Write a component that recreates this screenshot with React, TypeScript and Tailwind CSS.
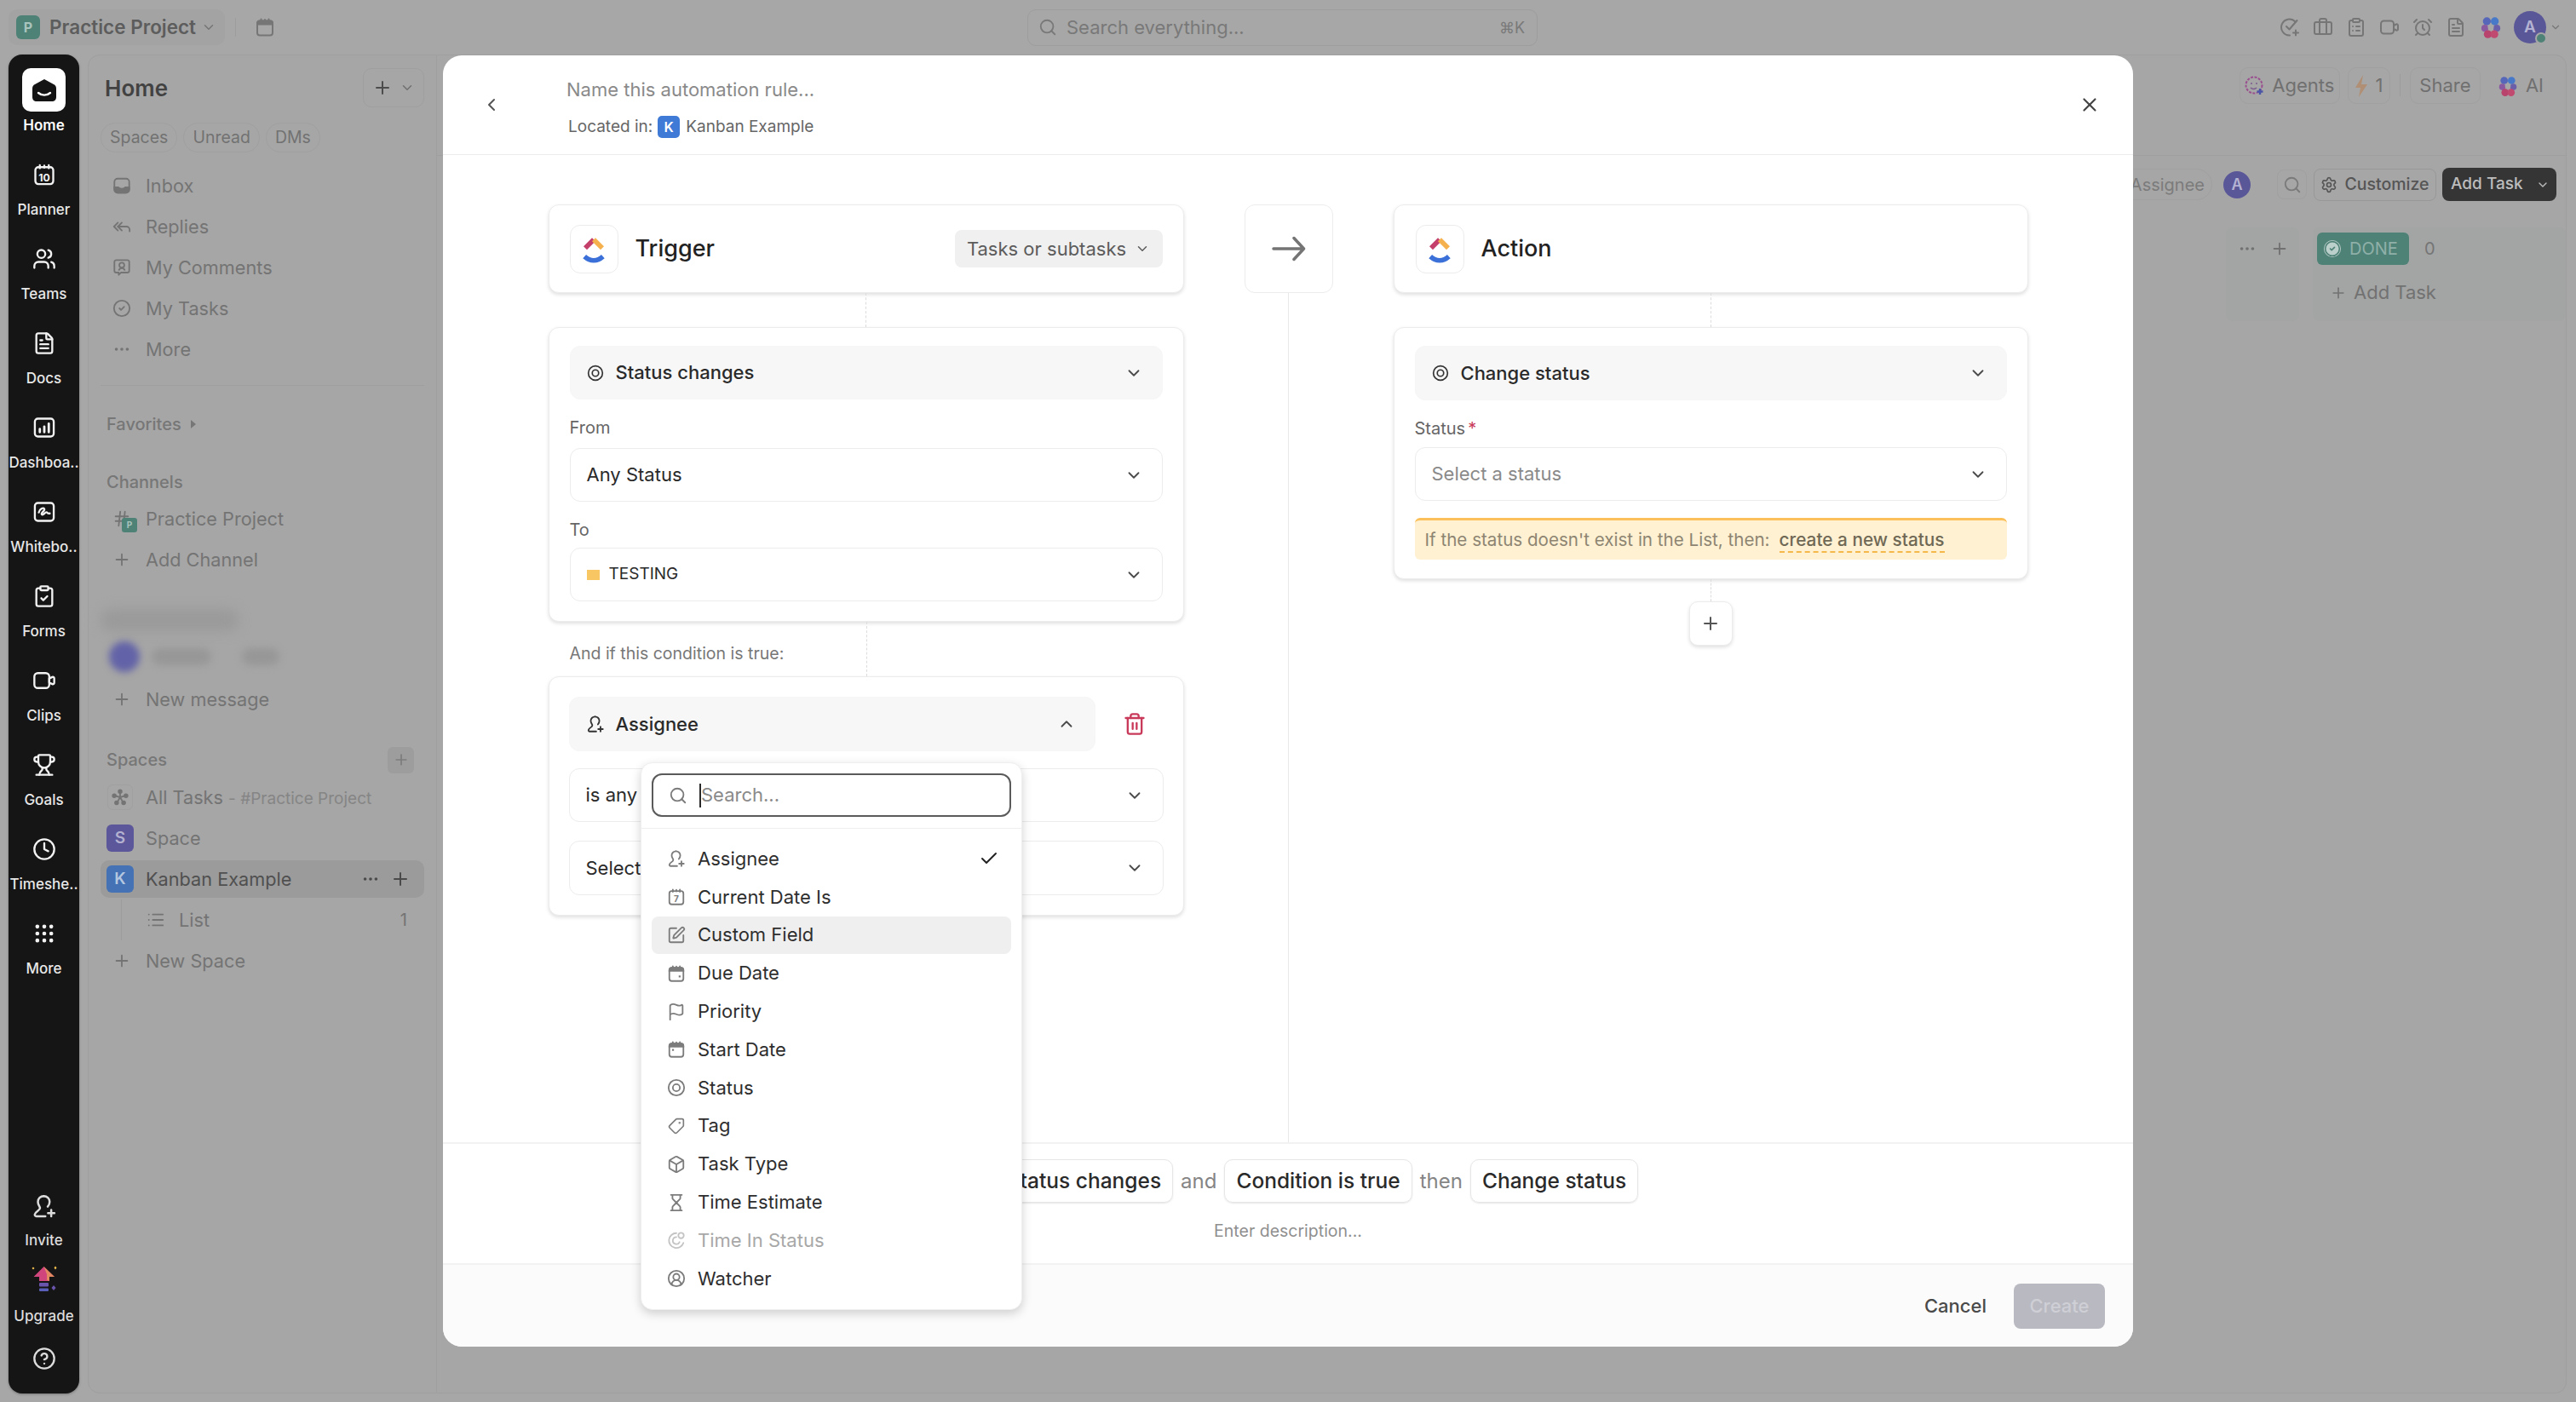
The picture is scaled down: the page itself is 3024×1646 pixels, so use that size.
import React from "react";
import {
  ChevronDown, ChevronUp, ChevronLeft, ReplyAll, CircleCheck, Ellipsis, Plus, Users, FileText, ClipboardCheck, Trophy, Clock, Grip, CircleHelp, Search, X, Trash2, Check, SquarePen, Flag, Tag, Box, Hourglass, CircleUserRound, List, Settings, AlarmClock, Briefcase, ClipboardList, Hash,
} from "lucide-react";

type P = { size?: number; className?: string };

function PersonPlus({ size = 24, className = "" }: P) {
  return (
    <svg width={size} height={size} viewBox="0 0 24 24" fill="none" stroke="currentColor" strokeWidth="2" strokeLinecap="round" strokeLinejoin="round" className={className}>
      <path d="M11.5 2.5a5.5 5.5 0 0 0-5.5 5.5c0 3 2 4.2 2 5.800 0 2-4.400 3.400-4.900 5.900-.2 1 .4 1.800 1.400 1.800H13" />
      <path d="M11.5 2.5A5.5 5.5 0 0 1 17 8c0 2-.8 3.400-1.800 4.500" />
      <path d="M18.5 15.500v6M15.500 18.500h6" />
    </svg>
  );
}

function Target({ size = 24, className = "" }: P) {
  return (
    <svg width={size} height={size} viewBox="0 0 24 24" fill="none" stroke="currentColor" strokeWidth="2" className={className}>
      <circle cx="12" cy="12" r="10" />
      <circle cx="12" cy="12" r="4.500" />
    </svg>
  );
}

function Cal({ size = 24, className = "", dot, label }: P & { dot?: "r" | "l"; label?: string }) {
  return (
    <svg width={size} height={size} viewBox="0 0 24 24" fill="none" stroke="currentColor" strokeWidth="2" strokeLinecap="round" className={className}>
      <rect x="3" y="4.500" width="18" height="17" rx="3" />
      {!label && <path d="M3 8.500V7.500a3 3 0 0 1 3-3h12a3 3 0 0 1 3 3v1z" fill="currentColor" />}
      <path d="M7.500 2.500v3M16.500 2.500v3M12 3v2" />
      {dot === "r" && <rect x="15" y="14.500" width="2.400" height="2.400" fill="currentColor" stroke="none" />}
      {dot === "l" && <rect x="6.500" y="11.500" width="2.400" height="2.400" fill="currentColor" stroke="none" />}
      {label && (
        <text x="12" y="18.500" textAnchor="middle" fontSize={label.length > 1 ? 10.500 : 11} fontWeight="700" fill="currentColor" stroke="none" fontFamily="Inter, sans-serif">
          {label}
        </text>
      )}
    </svg>
  );
}

function Logo({ size = 40 }: { size?: number }) {
  return (
    <svg width={size} height={size} viewBox="0 0 24 24" fill="none" strokeWidth="3.400">
      <path d="M6 11.500 12 5.500" stroke="#c4406b" />
      <path d="M12 5.500 18 11.500" stroke="#f6b14f" />
      <path d="M5.500 17.500c4 3.600 9 3.600 13 0" stroke="#3a70d8" />
    </svg>
  );
}

function Flower({ size = 26 }: { size?: number }) {
  return (
    <svg width={size} height={size} viewBox="0 0 24 24">
      <circle cx="8" cy="6" r="4" fill="#5666b8" />
      <circle cx="16" cy="6" r="4" fill="#4878c8" />
      <circle cx="6" cy="13" r="3.500" fill="#8a5aa0" />
      <circle cx="18" cy="13" r="3.500" fill="#6a5fa8" />
      <circle cx="9" cy="19" r="4" fill="#b8436c" />
      <circle cx="15.500" cy="19" r="4" fill="#c04a70" />
      <circle cx="12" cy="12" r="3" fill="#a7a7a7" />
    </svg>
  );
}

function InboxIcon() {
  return (
    <svg width="22" height="22" viewBox="0 0 24 24" fill="none" stroke="currentColor" strokeWidth="2">
      <rect x="2.500" y="3" width="19" height="18" rx="4" />
      <path d="M2.500 14h5c1 2.500 8 2.500 9 0h5v3a4 4 0 0 1-4 4h-11a4 4 0 0 1-4-4z" fill="currentColor" />
    </svg>
  );
}

function CommentIcon() {
  return (
    <svg width="22" height="22" viewBox="0 0 24 24" fill="none" stroke="currentColor" strokeWidth="2" strokeLinejoin="round">
      <path d="M5 2.500h14a2.500 2.500 0 0 1 2.500 2.500v11a2.500 2.500 0 0 1-2.500 2.500h-8l-3 3v-3H5A2.500 2.500 0 0 1 2.500 16V5A2.500 2.500 0 0 1 5 2.500z" />
      <circle cx="12" cy="9" r="3.200" />
      <path d="M8 16c.8-2 2-3 4-3s3.200 1 4 3" />
    </svg>
  );
}

function Wave({ size = 28 }: { size?: number }) {
  return (
    <svg width={size} height={size} viewBox="0 0 24 24" fill="none" stroke="currentColor" strokeWidth="2" strokeLinecap="round" strokeLinejoin="round">
      <rect x="2.500" y="3" width="19" height="18" rx="3" />
      <path d="M6.500 12.500c.5-3 4.500-5.500 5.500-3.500s-4 4-2.500 5.500 3.500-3 5-2 1 1.500 3 1" />
    </svg>
  );
}

function DashIcon({ size = 28 }: { size?: number }) {
  return (
    <svg width={size} height={size} viewBox="0 0 24 24" fill="none" stroke="currentColor" strokeWidth="2" strokeLinecap="round">
      <rect x="2.500" y="3" width="19" height="18" rx="3" />
      <path d="M7.500 16.500v-3M12 16.500v-5.500M16.500 16.500V8" strokeWidth="2.400" />
    </svg>
  );
}

function ClipIcon({ size = 28 }: P) {
  return (
    <svg width={size} height={size} viewBox="0 0 24 24" fill="none" stroke="currentColor" strokeWidth="2" strokeLinejoin="round">
      <rect x="2" y="4.500" width="15" height="15" rx="3.500" />
      <path d="M17 10l3-1.500c1-.5 2 .2 2 1.300v4.400c0 1.100-1 1.800-2 1.300L17 14z" />
    </svg>
  );
}

function CheckPlus({ size = 24 }: P) {
  return (
    <svg width={size} height={size} viewBox="0 0 24 24" fill="none" stroke="currentColor" strokeWidth="2" strokeLinecap="round" strokeLinejoin="round">
      <path d="M18.500 5.500A9.500 9.500 0 1 0 12 21.500" />
      <path d="M8 11l3.500 3.500L20.500 4" />
      <path d="M19 15.500v6M16 18.500h6" />
    </svg>
  );
}

function Star3({ size = 24 }: P) {
  return (
    <svg width={size} height={size} viewBox="0 0 24 24" fill="none" stroke="currentColor" strokeWidth="2" strokeLinecap="round">
      <path d="M12 12V5M12 12l-7-2M12 12l7-2M12 12l-4 7M12 12l4 7" />
      <circle cx="12" cy="4.500" r="2" fill="currentColor" />
      <circle cx="4.500" cy="10" r="2" fill="currentColor" />
      <circle cx="19.500" cy="10" r="2" fill="currentColor" />
      <circle cx="7.500" cy="19" r="2" fill="currentColor" />
      <circle cx="16.500" cy="19" r="2" fill="currentColor" />
    </svg>
  );
}

function HomeLogo() {
  return (
    <svg width="30" height="26" viewBox="0 0 30 26">
      <path d="M15 0 26 6c2 1 3 2.500 3 5v10c0 3-2 5-5 5H6c-3 0-5-2-5-5V11c0-2.500 1-4 3-5z" fill="#141414" />
      <path d="M8 16c4 3.500 10 3.500 14 0" stroke="#fff" strokeWidth="2.400" fill="none" strokeLinecap="round" />
    </svg>
  );
}

function UpgradeIcon() {
  return (
    <svg width="30" height="32" viewBox="0 0 30 32">
      <path d="M14.500 1 27 13h-6v5H9v-5H2.500z" fill="#d0467c" />
      <path d="M14.500 1 27 13h-6v5l-3-1v-7z" fill="#e8a05a" opacity=".75" />
      <rect x="9" y="20" width="11" height="4.500" rx="1" fill="#6a55ac" />
      <rect x="9" y="26.500" width="11" height="3.500" rx="1" fill="#5a5fb8" />
      <path d="M2 1.500 3.500 3 2 4.500.5 3zM28 .500l1.500 2-1.500 2-1.500-2z" fill="#f5c04f" />
      <path d="M26 23l2.500 3-2.500 3-2.500-3z" fill="#6a55ac" />
    </svg>
  );
}

function RailItem({ icon, label }: { icon: React.ReactNode; label: string }) {
  return (
    <div className="flex h-[99px] w-full flex-col items-center">
      <div className="flex h-[32px] items-center justify-center text-[#f2f2f2]">{icon}</div>
      <div className="mt-[13px] whitespace-nowrap text-[17px] font-medium leading-[24px] text-[#e8e8e8]">{label}</div>
    </div>
  );
}

function Rail() {
  const s = 28;
  return (
    <aside className="flex h-[1572px] w-[83px] flex-col items-center rounded-[16px] bg-[#151515] pt-[16px] shadow-[0_1px_3px_rgba(0,0,0,0.3)]">
      <div className="flex h-[51px] w-[51px] items-center justify-center rounded-[10px] bg-white">
        <HomeLogo />
      </div>
      <div className="mt-[4px] text-[17px] font-semibold leading-[24px] text-white">Home</div>
      <div className="mt-[30px] flex w-full flex-col">
        <RailItem icon={<Cal size={s} label="10" />} label="Planner" />
        <RailItem icon={<Users size={s} />} label="Teams" />
        <RailItem icon={<FileText size={s} />} label="Docs" />
        <RailItem icon={<DashIcon />} label="Dashboa.." />
        <RailItem icon={<Wave />} label="Whitebo.." />
        <RailItem icon={<ClipboardCheck size={s} />} label="Forms" />
        <RailItem icon={<ClipIcon />} label="Clips" />
        <RailItem icon={<Trophy size={s} />} label="Goals" />
        <RailItem icon={<Clock size={s} />} label="Timeshe.." />
        <RailItem icon={<Grip size={s} />} label="More" />
      </div>
      <div className="mt-auto flex w-full flex-col items-center pb-[27px] text-[#dcdcdc]">
        <PersonPlus size={30} />
        <div className="mt-[13px] text-[17px] font-medium leading-[24px]">Invite</div>
        <div className="mt-[18px]"><UpgradeIcon /></div>
        <div className="mt-[15px] text-[17px] font-medium leading-[24px]">Upgrade</div>
        <CircleHelp size={28} className="mt-[24px]" />
      </div>
    </aside>
  );
}

function SideRow({ icon, children, cls = "" }: { icon: React.ReactNode; children: React.ReactNode; cls?: string }) {
  return (
    <div className={`flex h-[48px] items-center text-[21.700px] text-[#747474] ${cls}`}>
      <div className="flex w-[53px] shrink-0 items-center pl-[14px]">{icon}</div>
      <div className="whitespace-nowrap">{children}</div>
    </div>
  );
}

function Tab({ children }: { children: React.ReactNode }) {
  return <div className="flex h-[35px] items-center rounded-full border border-[#a0a0a0] px-[10px] text-[19.500px] text-[#727272]">{children}</div>;
}

function SideBar() {
  return (
    <aside className="flex h-[1572px] w-[410px] flex-col rounded-tl-[14px] rounded-bl-[14px] border border-[#9f9f9f] bg-[#a6a6a6] px-[14px]">
      <div className="mt-[15px] flex h-[46px] items-center justify-between">
        <div className="pl-[5px] text-[26px] font-semibold text-[#424242]">Home</div>
        <div className="flex h-[46px] w-[72px] items-center justify-center gap-[8px] rounded-[10px] border border-[#9f9f9f] text-[#4c4c4c]">
          <Plus size={24} />
          <ChevronDown size={18} className="text-[#707070]" />
        </div>
      </div>
      <div className="mt-[18px] flex gap-[7px]">
        <Tab>Spaces</Tab>
        <Tab>Unread</Tab>
        <Tab>DMs</Tab>
      </div>
      <div className="mt-[15px]">
        <SideRow icon={<InboxIcon />}>Inbox</SideRow>
        <SideRow icon={<ReplyAll size={22} />}>Replies</SideRow>
        <SideRow icon={<CommentIcon />}>My Comments</SideRow>
        <SideRow icon={<CircleCheck size={22} />}>My Tasks</SideRow>
        <SideRow icon={<Ellipsis size={22} />}>More</SideRow>
      </div>
      <div className="mt-[18px] h-px bg-[#9f9f9f]" />
      <div className="mt-[30px] flex h-[30px] items-center pl-[7px] text-[20px] font-medium text-[#777777]">
        Favorites
        <svg width="8" height="10" viewBox="0 0 8 10" className="ml-[10px]"><path d="M1 0l6 5-6 5z" fill="#777777" /></svg>
      </div>
      <div className="mt-[38px] flex h-[30px] items-center pl-[7px] text-[20px] font-medium text-[#777777]">Channels</div>
      <div className="mt-[4px]">
        <SideRow
          icon={
            <div className="relative">
              <Hash size={22} />
              <div className="absolute left-[11px] top-[10px] flex h-[17px] w-[18px] items-center justify-center rounded-[3px] bg-[#4f8277] text-[10px] font-bold text-[#a9c3bd]">P</div>
            </div>
          }
        >
          Practice Project
        </SideRow>
        <SideRow icon={<Plus size={22} />}>Add Channel</SideRow>
      </div>
      <div className="mt-[34px] h-[26px] w-[162px] rounded-full bg-[#9a9a9a] blur-[7px]" />
      <div className="mt-[12px] flex h-[36px] items-center pl-[10px] blur-[4px]">
        <div className="h-[36px] w-[36px] rounded-full bg-[#6262a8]" />
        <div className="ml-[14px] h-[20px] w-[70px] rounded-full bg-[#979797]" />
        <div className="ml-[36px] h-[20px] w-[44px] rounded-full bg-[#979797]" />
      </div>
      <div className="mt-[8px]">
        <SideRow icon={<Plus size={22} />}>New message</SideRow>
      </div>
      <div className="mt-[31px] flex h-[32px] items-center justify-between pl-[7px] pr-[12px] text-[20px] font-medium text-[#777777]">
        Spaces
        <div className="flex h-[31px] w-[31px] items-center justify-center rounded-[6px] bg-[#9d9d9d] text-[#7c7c7c]"><Plus size={20} /></div>
      </div>
      <div className="mt-[4px]">
        <SideRow
          icon={
            <div className="-ml-[6px] flex h-[30px] w-[30px] items-center justify-center rounded-[6px] border border-[#a0a0a0]">
              <Star3 size={22} />
            </div>
          }
        >
          All Tasks <span className="text-[19px] text-[#858585]">- #Practice Project</span>
        </SideRow>
        <SideRow
          icon={<div className="-ml-[7px] flex h-[32px] w-[32px] items-center justify-center rounded-[6px] bg-[#5b579a] text-[19px] font-semibold text-[#b3b0d0]">S</div>}
        >
          Space
        </SideRow>
        <div className="flex h-[48px] items-center">
          <div className="flex h-[44px] w-full items-center rounded-[10px] bg-[#9b9b9b] text-[21.700px] text-[#505050]">
            <div className="flex w-[53px] shrink-0 items-center pl-[7px]">
              <div className="flex h-[32px] w-[32px] items-center justify-center rounded-[6px] bg-[#4472b5] text-[19px] font-semibold text-[#b5c7e0]">K</div>
            </div>
            Kanban Example
            <div className="ml-auto flex items-center gap-[12px] pr-[16px] text-[#4a4a4a]">
              <Ellipsis size={22} />
              <Plus size={24} />
            </div>
          </div>
        </div>
        <div className="flex h-[48px] items-center text-[21.700px] text-[#747474]">
          <div className="ml-[24px] h-full w-[1px] bg-[#9c9c9c]" />
          <List size={22} className="ml-[29px]" />
          <span className="ml-[16px]">List</span>
          <span className="ml-auto pr-[20px] text-[20px]">1</span>
        </div>
        <SideRow icon={<Plus size={22} />}>New Space</SideRow>
      </div>
    </aside>
  );
}

function Pill({ children, w }: { children: React.ReactNode; w: string }) {
  return <div className={`flex h-[43px] items-center justify-center gap-[8px] rounded-[10px] border border-[#a0a0a0] text-[22px] text-[#707070] ${w}`}>{children}</div>;
}

function MainPanel() {
  return (
    <main className="flex h-[1572px] w-[2500px] flex-col rounded-tr-[14px] rounded-br-[14px] border border-l-0 border-[#9f9f9f] bg-[#a6a6a6]">
      <div className="flex h-[118px] items-start justify-end gap-[9px] border-b border-[#9f9f9f] pr-[26px] pt-[14px]">
        <Pill w="w-[118px]">
          <svg width="24" height="24" viewBox="0 0 24 24" fill="none">
            <circle cx="11" cy="11" r="9.500" stroke="#9a4f8e" strokeWidth="2" strokeDasharray="3 1.500" />
            <circle cx="8" cy="9" r="1" fill="#7a5a8e" />
            <circle cx="14" cy="9" r="1" fill="#7a5a8e" />
            <path d="M7 14c2 2 5 2 7 0" stroke="#7a5a8e" strokeWidth="1.500" />
            <path d="M18 15v7M14.500 18.500h7" stroke="#4b55a8" strokeWidth="2.400" />
          </svg>
          Agents
        </Pill>
        <Pill w="w-[50px]">
          <svg width="16" height="26" viewBox="0 0 16 26"><path d="M10 0 1 15h6l-2 11 10-15H8z" fill="#b08f74" /></svg>
          1
        </Pill>
        <div className="mx-[2px] mt-[8px] h-[26px] w-[1px] bg-[#9c9c9c]" />
        <Pill w="w-[83px]">Share</Pill>
        <div className="ml-[10px] flex h-[43px] items-center gap-[8px] text-[22px] text-[#707070]"><Flower />AI</div>
      </div>
      <div className="mt-[14px] flex h-[39px] items-center justify-end pr-[11px]">
        <div className="mr-[13px] flex h-[37px] w-[200px] items-center justify-end rounded-full border border-[#a0a0a0] pr-[8px] text-[20px] text-[#7b7b7b]">Assignee</div>
        <div className="flex h-[32px] w-[32px] items-center justify-center rounded-full bg-[#5a5798] text-[18px] font-semibold text-[#b4b2d2]">A</div>
        <div className="ml-[31px] flex h-[35px] w-[35px] items-center justify-center rounded-[8px] border border-[#a0a0a0] text-[#7a7a7a]"><Search size={22} /></div>
        <div className="ml-[8px] flex h-[38px] w-[144px] items-center justify-center gap-[8px] rounded-[8px] border border-[#989898] text-[19.500px] font-medium text-[#555555]">
          <Settings size={20} />
          Customize
        </div>
        <div className="ml-[7px] flex h-[39px] w-[134px] items-center rounded-[8px] bg-[#353535] pl-[10px] text-[19px] font-medium text-[#bdbdbd]">
          Add Task
          <ChevronDown size={16} className="ml-auto mr-[8px]" />
        </div>
      </div>
      <div className="mt-[31px] flex gap-[16px] pl-[2100px]">
        <div className="flex h-[110px] flex-1 justify-end rounded-[8px] bg-[#a3a4a4] pr-[12px] pt-[13px] text-[#717171]">
          <div className="flex h-[24px] items-center gap-[16px]">
            <Ellipsis size={22} />
            <Plus size={22} />
          </div>
        </div>
        <div className="flex h-[110px] w-[297px] flex-col rounded-[8px] bg-[#a3a4a4] pl-[5px] pt-[6px]">
          <div className="flex items-center gap-[18px]">
            <div className="flex h-[38px] w-[108px] items-center gap-[10px] rounded-[6px] bg-[#4f8277] pl-[8px] text-[20px] text-[#8fb0a8]">
              <CircleCheck size={20} className="rounded-full bg-[#bcd0cb] text-[#4f8277]" />
              DONE
            </div>
            <span className="text-[20px] text-[#757575]">0</span>
          </div>
          <div className="mt-[16px] flex items-center gap-[8px] pl-[15px] text-[22px] text-[#727272]">
            <Plus size={20} />
            Add Task
          </div>
        </div>
      </div>
    </main>
  );
}

function TopBar() {
  const c = "text-[#767676]";
  return (
    <header className="flex h-[64px] items-center pl-[10px] pr-[17px]">
      <div className="flex h-[42px] w-[254px] items-center rounded-[10px] bg-[#a3a3a3] pl-[9px]">
        <div className="flex h-[28px] w-[28px] items-center justify-center rounded-[6px] bg-[#4f8277] text-[16px] font-bold text-[#a9c3bd]">P</div>
        <span className="ml-[11px] whitespace-nowrap text-[22.500px] font-semibold text-[#5d5d5d]">Practice Project</span>
        <ChevronDown size={18} className="ml-[6px] text-[#757575]" />
      </div>
      <div className="ml-[12px] h-[22px] w-[1px] bg-[#9c9c9c]" />
      <div className={`ml-[22px] ${c}`}><Cal size={24} /></div>
      <div className="ml-[883px] flex h-[43px] w-[599px] items-center rounded-[10px] border border-[#9d9d9d] pl-[12px] pr-[14px] text-[22px] text-[#797979]">
        <Search size={22} />
        <span className="ml-[11px]">Search everything...</span>
        <span className="ml-auto text-[18px]">⌘K</span>
      </div>
      <div className={`ml-auto flex items-center gap-[15px] ${c}`}>
        <CheckPlus size={24} />
        <Briefcase size={24} />
        <ClipboardList size={24} />
        <ClipIcon size={24} />
        <AlarmClock size={24} />
        <FileText size={24} />
        <Flower size={28} />
        <div className="relative ml-[-2px] flex h-[38px] w-[38px] items-center justify-center rounded-full bg-[#5a5798] text-[19px] font-semibold text-[#b4b2d2]">
          A
          <div className="absolute -bottom-[1px] -right-[1px] h-[14px] w-[14px] rounded-full border-2 border-[#a7a7a7] bg-[#4f8277]" />
        </div>
      </div>
      <ChevronDown size={14} className="ml-[4px] text-[#767676]" />
    </header>
  );
}

function Card({ children, cls = "" }: { children: React.ReactNode; cls?: string }) {
  return <div className={`rounded-[12px] border border-[#ececec] bg-white shadow-[0_2px_4px_rgba(0,0,0,0.13)] ${cls}`}>{children}</div>;
}

function LogoBox() {
  return (
    <div className="flex h-[57px] w-[57px] items-center justify-center rounded-[12px] border border-[#ececec] bg-white">
      <Logo />
    </div>
  );
}

function Select({ children, filled, h = "h-[63px]", up }: { children: React.ReactNode; filled?: boolean; h?: string; up?: boolean }) {
  return (
    <div className={`flex items-center rounded-[12px] border pl-[19px] pr-[22px] text-[22px] ${h} ${filled ? "border-[#f6f6f6] bg-[#f7f7f7]" : "border-[#ececec] bg-white"}`}>
      <div className="flex min-w-0 flex-1 items-center whitespace-nowrap">{children}</div>
      {up ? <ChevronUp size={22} className="text-[#4a4a4a]" /> : <ChevronDown size={22} className="text-[#4a4a4a]" />}
    </div>
  );
}

function Dashed({ h }: { h: string }) {
  return <div className={`mx-auto w-0 border-l border-dashed border-[#dcdcdc] ${h}`} />;
}

const ITEMS: { icon: React.ReactNode; label: string; on?: boolean; hover?: boolean; dim?: boolean }[] = [
  { icon: <PersonPlus size={22} />, label: "Assignee", on: true },
  { icon: <Cal size={22} label="7" />, label: "Current Date Is" },
  { icon: <SquarePen size={22} />, label: "Custom Field", hover: true },
  { icon: <Cal size={22} dot="r" />, label: "Due Date" },
  { icon: <Flag size={22} />, label: "Priority" },
  { icon: <Cal size={22} dot="l" />, label: "Start Date" },
  { icon: <Target size={22} />, label: "Status" },
  { icon: <Tag size={20} className="rotate-90" />, label: "Tag" },
  { icon: <Box size={22} />, label: "Task Type" },
  { icon: <Hourglass size={22} />, label: "Time Estimate" },
  {
    icon: (
      <svg width="22" height="22" viewBox="0 0 24 24" fill="none" stroke="currentColor" strokeWidth="2" strokeLinecap="round">
        <path d="M12 3a9.500 9.500 0 1 0 9 12.500" />
        <path d="M12 8a4.500 4.500 0 1 0 4 6.500" />
        <circle cx="18" cy="6" r="3.500" />
      </svg>
    ),
    label: "Time In Status",
    dim: true,
  },
  { icon: <CircleUserRound size={22} />, label: "Watcher" },
];

function Dropdown() {
  return (
    <div className="absolute left-[232px] top-[830px] z-10 flex h-[643px] w-[448px] flex-col rounded-[14px] border border-[#efefef] bg-white shadow-[0_4px_12px_rgba(0,0,0,0.18)]">
      <div className="border-b border-[#efefef] px-[12px] pb-[13px] pt-[12px]">
        <div className="flex h-[51px] items-center rounded-[12px] border-2 border-[#5a5a5a] pl-[18px] text-[22px] text-[#8a8a8a]">
          <Search size={22} className="text-[#7a7a7a]" />
          <span className="ml-[14px] h-[28px] w-[2px] bg-[#2a2a2a]" />
          <span>Search...</span>
        </div>
      </div>
      <div className="flex flex-col px-[12px] pt-[13px]">
        {ITEMS.map((it) => (
          <div key={it.label} className={`flex h-[44.800px] items-center rounded-[8px] pl-[18px] pr-[14px] text-[22px] ${it.hover ? "bg-[#efefef]" : ""} ${it.dim ? "text-[#a8a8a8]" : "text-[#2e2e2e]"}`}>
            <span className={`flex w-[22px] justify-center ${it.dim ? "text-[#c4c4c4]" : "text-[#7c7c7c]"}`}>{it.icon}</span>
            <span className="ml-[14px]">{it.label}</span>
            {it.on && <Check size={24} className="ml-auto text-[#222222]" />}
          </div>
        ))}
      </div>
    </div>
  );
}

function Chip({ children }: { children: React.ReactNode }) {
  return <div className="flex h-[51px] items-center rounded-[10px] border border-[#e6e6e6] px-[13px] text-[24.500px] font-medium text-[#2a2a2a] shadow-[0_1px_2px_rgba(0,0,0,0.1)]">{children}</div>;
}

function Modal() {
  return (
    <section className="absolute left-[520px] top-[65px] z-20 flex h-[1516px] w-[1984px] flex-col overflow-hidden rounded-[22px] bg-white">
      <div className="flex h-[117px] shrink-0 items-center border-b border-[#ececec] pl-[45px] pr-[38px]">
        <ChevronLeft size={24} className="text-[#555555]" />
        <div className="ml-[76px] flex flex-col pt-[6px]">
          <div className="text-[22px] leading-[28px] text-[#8a8a8a]">Name this automation rule...</div>
          <div className="ml-[2px] mt-[17px] flex items-center text-[19px] leading-[26px] text-[#666666]">
            Located in:
            <span className="ml-[6px] flex h-[26px] w-[26px] items-center justify-center rounded-[5px] bg-[#3f7ad6] text-[16px] font-semibold text-white">K</span>
            <span className="ml-[7px]">Kanban Example</span>
          </div>
        </div>
        <X size={26} className="ml-auto text-[#444444]" />
      </div>

      <div className="flex h-[1161px] shrink-0 justify-center gap-[71px] border-b-2 border-[#f2f2f2] pt-[58px]">
        <div className="flex w-[746px] flex-col">
          <Card cls="flex h-[104px] items-center pl-[24px] pr-[24px]">
            <LogoBox />
            <span className="ml-[20px] text-[27px] font-medium text-[#222222]">Trigger</span>
            <div className="ml-auto flex h-[44px] w-[244px] items-center justify-center gap-[10px] rounded-[8px] bg-[#f0f0f0] text-[22px] text-[#5c5c5c]">
              Tasks or subtasks
              <ChevronDown size={18} />
            </div>
          </Card>
          <Dashed h="h-[40px]" />
          <Card cls="flex h-[346px] flex-col px-[24px] pt-[21px]">
            <Select filled>
              <Target size={20} className="text-[#333333]" />
              <span className="ml-[14px] font-medium text-[#2a2a2a]">Status changes</span>
            </Select>
            <div className="mt-[21px] text-[20px] leading-[24px] text-[#666666]">From</div>
            <div className="mt-[12px]"><Select><span className="text-[#2a2a2a]">Any Status</span></Select></div>
            <div className="mt-[21px] text-[20px] leading-[24px] text-[#666666]">To</div>
            <div className="mt-[9px]">
              <Select>
                <span className="h-[12px] w-[15px] bg-[#f8c663]" />
                <span className="ml-[11px] text-[19px] text-[#2a2a2a]">TESTING</span>
              </Select>
            </div>
          </Card>
          <div className="relative flex h-[64px] items-center pl-[25px] pt-[12px] text-[19.500px] text-[#777777]">
            And if this condition is true:
            <div className="absolute bottom-0 left-[373px] top-0 border-l border-dashed border-[#dcdcdc]" />
          </div>
          <Card cls="flex h-[281px] flex-col px-[23px] pt-[23px]">
            <div className="flex items-center">
              <div className="w-[618px]">
                <Select filled h="h-[64px]" up>
                  <PersonPlus size={22} className="text-[#333333]" />
                  <span className="ml-[13px] font-medium text-[#2a2a2a]">Assignee</span>
                </Select>
              </div>
              <div className="flex flex-1 justify-center pl-[12px] text-[#c93a5a]"><Trash2 size={28} /></div>
            </div>
            <div className="mt-[20px]">
              <Select><span className="text-[#2a2a2a]">is any</span></Select>
            </div>
            <div className="mt-[22px]">
              <Select h="h-[64px]"><span className="text-[#2a2a2a]">Select</span></Select>
            </div>
          </Card>
        </div>

        <div className="flex w-[104px] flex-col items-center">
          <Card cls="flex h-[104px] w-[104px] items-center justify-center shadow-none">
            <svg width="40" height="30" viewBox="0 0 40 30" fill="none" stroke="#747474" strokeWidth="3.500" strokeLinecap="round" strokeLinejoin="round">
              <path d="M2 15h35M26 2.500 37.500 15 26 27.500" />
            </svg>
          </Card>
          <div className="w-[1px] flex-1 bg-[#e8e8e8]" />
        </div>

        <div className="flex w-[745px] flex-col">
          <Card cls="flex h-[104px] items-center pl-[25px]">
            <LogoBox />
            <span className="ml-[20px] text-[27px] font-medium text-[#222222]">Action</span>
          </Card>
          <Dashed h="h-[40px]" />
          <Card cls="flex h-[296px] flex-col px-[24px] pt-[21px]">
            <Select filled h="h-[64px]">
              <Target size={20} className="text-[#333333]" />
              <span className="ml-[14px] font-medium text-[#2a2a2a]">Change status</span>
            </Select>
            <div className="mt-[21px] text-[20px] leading-[24px] text-[#666666]">Status<span className="ml-[3px] text-[#c93a5a]">*</span></div>
            <div className="mt-[10px]"><Select><span className="text-[#8a8a8a]">Select a status</span></Select></div>
            <div className="mt-[20px] flex h-[49px] items-center rounded-[6px] border-t-[3px] border-[#fcc05a] bg-[#fff1d2] pl-[12px] text-[20.600px] text-[#8d8572]">
              If the status doesn't exist in the List, then:
              <span className="ml-[11px] border-b-2 border-dashed border-[#f5b84a] text-[20.800px] font-medium leading-[27px] text-[#6f6855]">create a new status</span>
            </div>
          </Card>
          <Dashed h="h-[26px]" />
          <div className="mx-auto flex h-[52px] w-[51px] items-center justify-center rounded-[10px] border border-[#ececec] bg-white text-[#555555] shadow-[0_2px_4px_rgba(0,0,0,0.13)]">
            <Plus size={24} />
          </div>
        </div>
      </div>

      <div className="flex h-[142px] shrink-0 flex-col items-center border-b-2 border-[#f2f2f2] pt-[18px]">
        <div className="flex items-center gap-[9px] pr-[8px] text-[24px] text-[#858585]">
          <span>When</span>
          <Chip>Status changes</Chip>
          <span>and</span>
          <Chip>Condition is true</Chip>
          <span>then</span>
          <Chip>Change status</Chip>
        </div>
        <div className="mt-[19px] text-[19.500px] text-[#8f8f8f]">Enter description...</div>
      </div>

      <div className="flex flex-1 items-center justify-end bg-[#fbfbfb] pr-[33px]">
        <span className="text-[22px] font-medium text-[#4a4a4a]">Cancel</span>
        <div className="ml-[32px] flex h-[53px] w-[107px] items-center justify-center rounded-[8px] bg-[#b9b9c1] text-[22px] font-medium text-[#cfcfd6]">Create</div>
      </div>

      <Dropdown />
    </section>
  );
}

export default function App() {
  return (
    <div className="relative h-[1646px] w-[3024px] overflow-hidden bg-[#a7a7a7] [font-family:Inter,sans-serif]">
      <TopBar />
      <div className="flex pl-[10px]">
        <Rail />
        <div className="ml-[10px] flex">
          <SideBar />
          <MainPanel />
        </div>
      </div>
      <Modal />
    </div>
  );
}
